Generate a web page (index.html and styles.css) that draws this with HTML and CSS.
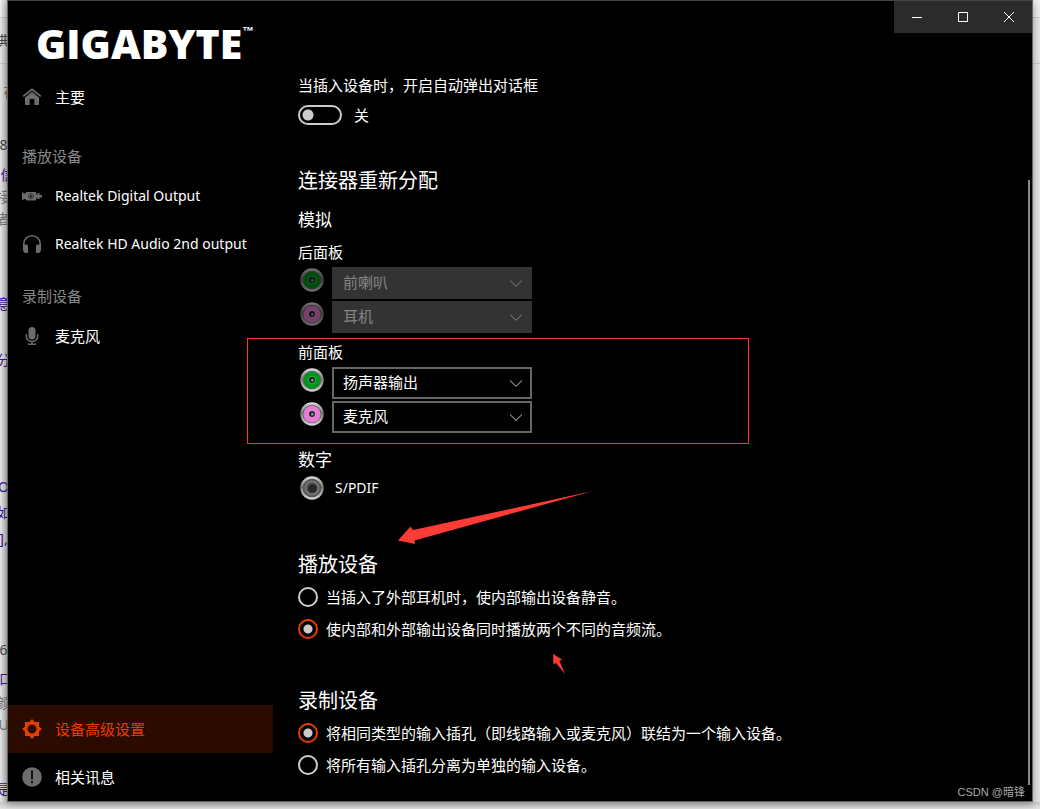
FILE: index.html
```html
<!DOCTYPE html>
<html lang="zh-CN">
<head>
<meta charset="utf-8">
<title>GIGABYTE</title>
<link rel="stylesheet" href="styles.css">
</head>
<body>
<div class="edge" aria-hidden="true">
  <span class="frag s1">典</span>
  <span class="frag s2 brown">在</span>
  <span class="frag s3">8</span>
  <span class="frag s4 purple">信</span>
  <span class="frag s5 grey">接</span>
  <span class="frag s5 grey">者</span>
  <span class="frag s6 purple">意</span>
  <span class="frag s7 purple">分</span>
  <span class="frag s8 purple">O</span>
  <span class="frag s9 purple">如</span>
  <span class="frag s9 purple">],</span>
  <span class="frag s10">6</span>
  <span class="frag s11 purple">口</span>
  <span class="frag s12 grey">颜</span>
  <span class="frag s5 grey">U</span>
  <span class="frag s13 purple">是</span>
</div>
<div class="window">
  <div class="titlebar">
    <button class="winbtn" aria-label="最小化"><svg width="10" height="10" viewBox="0 0 10 10"><path d="M0 5.5H10"/></svg></button>
    <button class="winbtn" aria-label="最大化"><svg width="10" height="10" viewBox="0 0 10 10"><path d="M.5.5h9v9h-9z"/></svg></button>
    <button class="winbtn" aria-label="关闭"><svg width="10" height="10" viewBox="0 0 10 10"><path d="M0 0L10 10M10 0L0 10"/></svg></button>
  </div>

  <aside class="sidebar">
    <div class="logo">GIGABYTE<span class="tm">™</span></div>
    <nav class="nav">
      <a class="item" href="#main"><svg class="ico" viewBox="0 0 20 20"><path d="M10 1.200L.6 8.800l1.100 1.300L10 3.500l8.300 6.600 1.100-1.300z"/><path d="M10 4.800l-7 5.600V18h4.600v-6h4.800v6H17v-7.600z"/></svg><span>主要</span></a>
      <h2 class="group first">播放设备</h2>
      <a class="item latin" href="#digital"><svg class="ico" viewBox="0 0 20 20"><path d="M0 6.500h1.500v1h2L4.500 6h9l1 1.500V9h1V7h2v2H20v2.500h-2.500V13h-2v-1.500h-1V13l-1 1.500h-9L3.500 13h-2v1H0z"/><circle cx="9" cy="10.200" r="2.600" fill="none" stroke="#3a3a3a"/><path class="cut" d="M8.500 8.700h1v1h1v1h-1v1h-1v-1h-1v-1h1z"/></svg><span>Realtek Digital Output</span></a>
      <a class="item latin" href="#headphone"><svg class="ico" viewBox="0 0 20 20"><path d="M1.700 14V10a8.300 8.300 0 0 1 16.600 0v4" fill="none" stroke="#6d6d6d" stroke-width="1.500"/><path d="M1 10.500h3.500Q6 10.500 6 12v7H4Q1 19 1 15zM19 10.500h-3.500Q14 10.500 14 12v7h2q3 0 3-4z"/></svg><span>Realtek HD Audio 2nd output</span></a>
      <h2 class="group">录制设备</h2>
      <a class="item" href="#mic"><svg class="ico" viewBox="0 0 20 20"><rect x="6.500" y="1" width="7" height="12.500" rx="3.500"/><path d="M4.300 8v2.500a5.700 5 0 0 0 11.400 0V8M10 15.500V18M6 18.300h8" fill="none" stroke="#6d6d6d" stroke-width="1.500"/></svg><span>麦克风</span></a>
    </nav>
    <nav class="nav bottom">
      <a class="item active" href="#advanced"><svg class="ico" viewBox="0 0 20 20"><path fill-rule="evenodd" d="M10 0l2.600 3H17v4.400L20 10l-3 2.600V17h-4.400L10 20l-2.600-3H3v-4.400L0 10l3-2.600V3h4.400zM10 5.500a4.500 4.500 0 1 0 0 9a4.500 4.500 0 1 0 0-9z"/></svg><span>设备高级设置</span></a>
      <a class="item" href="#about"><svg class="ico" viewBox="0 0 20 20"><circle cx="10" cy="10" r="9.800"/><path class="cut" d="M9 3.500h2v9H9zM9 14h2v2.200H9z"/></svg><span>相关讯息</span></a>
    </nav>
  </aside>

  <main class="content">
    <svg class="defs" width="0" height="0" aria-hidden="true">
      <defs>
        <linearGradient id="ring" x1="0" y1="0" x2="0" y2="1"><stop offset="0" stop-color="#ddd"/><stop offset=".45" stop-color="#777"/><stop offset="1" stop-color="#d8d8d8"/></linearGradient>
        <symbol id="jack" viewBox="0 0 24 24">
          <circle cx="12" cy="12" r="11.700" fill="url(#ring)"/>
          <circle cx="12" cy="12" r="9.300" fill="#666"/>
          <circle cx="12" cy="12.300" r="8.500" fill="currentColor"/>
          <circle cx="12" cy="12" r="4" fill="#fff" opacity=".18"/>
          <circle cx="12" cy="12" r="3" fill="#222"/>
          <circle cx="12.300" cy="12.300" r="1.300" fill="#999"/>
        </symbol>
        <symbol id="chev" viewBox="0 0 12 7"><path d="M0 .5L6 6.300L12 .5" fill="none" stroke="currentColor"/></symbol>
      </defs>
    </svg>

    <p class="line" id="popup">当插入设备时，开启自动弹出对话框</p>
    <label class="toggle"><input type="checkbox" role="switch" aria-labelledby="popup"><span>关</span></label>

    <h1 class="title assign">连接器重新分配</h1>
    <h2 class="subtitle">模拟</h2>

    <section class="panel rear">
      <h3 class="line">后面板</h3>
      <div class="port off">
        <svg class="jack green"><use href="#jack"/></svg>
        <div class="combo"><select disabled aria-label="后面板 绿色插孔"><option>前喇叭</option></select><svg class="chev"><use href="#chev"/></svg></div>
      </div>
      <div class="port off">
        <svg class="jack pink"><use href="#jack"/></svg>
        <div class="combo"><select disabled aria-label="后面板 粉色插孔"><option>耳机</option></select><svg class="chev"><use href="#chev"/></svg></div>
      </div>
    </section>

    <section class="panel front">
      <h3 class="line">前面板</h3>
      <div class="port">
        <svg class="jack green"><use href="#jack"/></svg>
        <div class="combo"><select aria-label="前面板 绿色插孔"><option>扬声器输出</option></select><svg class="chev"><use href="#chev"/></svg></div>
      </div>
      <div class="port">
        <svg class="jack pink"><use href="#jack"/></svg>
        <div class="combo"><select aria-label="前面板 粉色插孔"><option>麦克风</option></select><svg class="chev"><use href="#chev"/></svg></div>
      </div>
      <div class="marker"></div>
    </section>

    <h2 class="subtitle digital">数字</h2>
    <div class="spdif">
      <svg class="jack" viewBox="0 0 24 24"><circle cx="12" cy="12" r="11.700" fill="url(#ring)"/><circle cx="12" cy="12" r="9.300" fill="#555"/><circle cx="12" cy="12" r="7.500" fill="#777"/><circle cx="12" cy="12" r="5.500" fill="#484848"/><circle cx="12.500" cy="12.500" r="4" fill="#282828"/></svg>
      <span>S/PDIF</span>
      <svg class="arrow-long" viewBox="0 0 196 56"><path d="M195 1L15 40L12.500 36.500L0 50.500L17 54L16.500 50.500z"/></svg>
    </div>

    <fieldset class="choices playback">
      <legend class="title">播放设备</legend>
      <label class="choice"><input type="radio" name="play"><span>当插入了外部耳机时，使内部输出设备静音。</span></label>
      <label class="choice"><input type="radio" name="play" checked><span>使内部和外部输出设备同时播放两个不同的音频流。</span></label>
      <svg class="arrow-short" viewBox="0 0 14 22"><path d="M1 1L10 6.500L7.500 8L13 21L4 10L1.500 11.500z"/></svg>
    </fieldset>

    <fieldset class="choices record">
      <legend class="title">录制设备</legend>
      <label class="choice"><input type="radio" name="rec" checked><span>将相同类型的输入插孔（即线路输入或麦克风）联结为一个输入设备。</span></label>
      <label class="choice"><input type="radio" name="rec"><span>将所有输入插孔分离为单独的输入设备。</span></label>
    </fieldset>
  </main>
  <div class="scroll"></div>
  <div class="credit">CSDN @暗锋</div>
</div>
</body>
</html>
```
FILE: styles.css
```css
* { box-sizing: border-box; }

body {
  margin: 0;
  min-height: 100vh;
  display: flex;
  padding: 0 7px 7px 0;
  background: linear-gradient(#f0f0f0 0 17px, #ccc 17px 18px, #e8e8e8 18px 63px, #ccc 63px 64px, #e6e6e6 64px calc(100% - 7px), #ccc calc(100% - 7px), #e4e4e4);
  font: 15px/24px "Noto Sans", "Noto Sans CJK SC", sans-serif;
  color: #fff;
}

h1, h2, h3, p { margin: 0; font-weight: 400; }

.edge {
  flex: none;
  width: 7px;
  overflow: hidden;
  display: flex;
  flex-direction: column;
  align-items: center;
  background: linear-gradient(to right, transparent, rgba(0, 0, 0, .15));
  font-size: 14px;
  line-height: 20px;
  color: #444;
}
.frag { flex: none; height: 20px; }
.s1 { margin-top: 31px; }
.s2 { margin-top: 31px; margin-left: 14px; }
.s3 { margin-top: 33px; }
.s4 { margin-top: 10px; margin-left: 8px; }
.s5 { margin-top: 2px; }
.s6 { margin-top: 65px; }
.s7 { margin-top: 36px; }
.s8 { margin-top: 107px; }
.s9 { margin-top: 6px; }
.s10 { margin-top: 91px; }
.s11 { margin-top: 9px; margin-left: 5px; }
.s12 { margin-top: 4px; }
.s13 { margin-top: 44px; }
.purple { color: #3c1090; }
.brown { color: #8a6040; }
.grey { color: #777; }

.window {
  position: relative;
  flex: 1;
  display: flex;
  background: #000;
  border: 1px solid #666;
  border-top-color: #444;
  box-shadow: 0 2px 8px rgba(0, 0, 0, .4);
}

.titlebar {
  position: absolute;
  top: 0;
  right: 0;
  display: flex;
  background: #2b2b2b;
}
.winbtn {
  width: 46px;
  height: 32px;
  padding: 0;
  border: 0;
  background: none;
  display: flex;
  align-items: center;
  justify-content: center;
}
.winbtn path { fill: none; stroke: #fff; }

.sidebar {
  flex: none;
  width: 265px;
  display: flex;
  flex-direction: column;
}
.logo {
  height: 72px;
  padding: 18px 0 0 28px;
  display: flex;
  font: 800 41px/48px "Open Sans", sans-serif;
}
.tm { font: 700 12px/24px "Liberation Sans", sans-serif; }
.nav { display: flex; flex-direction: column; }
.bottom { margin-top: auto; }
.item {
  height: 48px;
  padding-left: 14px;
  display: flex;
  align-items: center;
  gap: 13px;
  color: #fff;
  text-decoration: none;
}
.latin { font-size: 14px; }
.ico { flex: none; width: 20px; height: 20px; fill: #6d6d6d; }
.ico .cut { fill: #111; }
.group {
  margin: 16px 0 4px 14px;
  font-size: 15px;
  line-height: 24px;
  color: #888;
}
.group.first { margin-top: 23px; }
.active { background: #2b0b00; color: #e63e00; }
.active .ico { fill: #e63e00; }

.content {
  flex: 1;
  min-width: 0;
  padding: 72px 24px 20px 25px;
}
.defs { position: absolute; }
.line { font-size: 15px; line-height: 24px; }
.title { font-size: 20px; line-height: 28px; }
.subtitle { font-size: 17px; line-height: 24px; margin-top: 13px; }
.assign { margin-top: 40px; }

.toggle {
  display: flex;
  align-items: center;
  gap: 12px;
  margin-top: 6px;
  width: max-content;
}
.toggle input {
  appearance: none;
  width: 44px;
  height: 20px;
  margin: 0;
  border: 2px solid #ccc;
  border-radius: 10px;
  background: radial-gradient(circle at 8px 8px, #ccc 5px, transparent 6px);
}

.panel { display: flex; flex-direction: column; gap: 2px; }
.panel .line { margin-bottom: 1px; }
.rear { margin-top: 8px; }
.front { position: relative; margin-top: 7px; }
.port { display: flex; gap: 8px; padding-left: 2px; }
.jack { flex: none; width: 24px; height: 24px; margin-top: 1px; }
.green { color: #00961e; }
.pink { color: #e47bd4; }
.off .jack { opacity: .52; }
.combo { display: grid; width: 200px; color: #fff; }
.combo > * { grid-area: 1 / 1; }
.combo select {
  appearance: none;
  height: 32px;
  padding: 0 32px 2px 9px;
  border: 2px solid #666;
  border-radius: 0;
  background: #000;
  color: #fff;
  font: 15px/24px "Noto Sans CJK SC", sans-serif;
}
.combo select:disabled {
  background: #333;
  border-color: #333;
  color: #858585;
  opacity: 1;
}
.chev {
  width: 12px;
  height: 7px;
  place-self: center end;
  margin-right: 10px;
  color: #ccc;
  pointer-events: none;
}
.off .chev { color: #858585; }
.marker {
  position: absolute;
  top: -2px;
  left: -51px;
  width: 502px;
  height: 106px;
  border: 1px solid #f33;
  pointer-events: none;
}

.digital { margin-top: 15px; }
.spdif {
  position: relative;
  display: flex;
  align-items: center;
  gap: 11px;
  padding-left: 2px;
  margin-top: 4px;
  font-size: 14px;
}
.spdif .jack { margin-top: 0; }
.arrow-long, .arrow-short { position: absolute; fill: #ff3b36; }
.arrow-long { left: 100px; top: 14px; width: 196px; height: 56px; }
.arrow-short { left: 254px; top: 102px; width: 14px; height: 22px; }

.choices {
  margin: 0;
  padding: 0;
  border: 0;
  min-width: 0;
  position: relative;
}
.playback { margin-top: 51px; }
.record { margin-top: 46px; }
.choices .title { padding: 0; margin-bottom: 6px; }
.choices .arrow-short { top: 68px; }
.choice { display: flex; align-items: center; gap: 8px; }
.choice + .choice { margin-top: 8px; }
.choice input {
  appearance: none;
  flex: none;
  width: 20px;
  height: 20px;
  margin: 0;
  border: 2px solid #ccc;
  border-radius: 50%;
}
.choice input:checked {
  border-color: #e63e00;
  background: radial-gradient(circle, #ccc 4px, transparent 5px);
}

.scroll {
  position: absolute;
  top: 179px;
  right: 2px;
  bottom: 16px;
  width: 2px;
  background: #888;
}
.credit {
  position: absolute;
  right: 7px;
  bottom: 0;
  font: 11px/18px "Liberation Sans", "Noto Sans CJK SC", sans-serif;
  color: #aaa;
}
```
